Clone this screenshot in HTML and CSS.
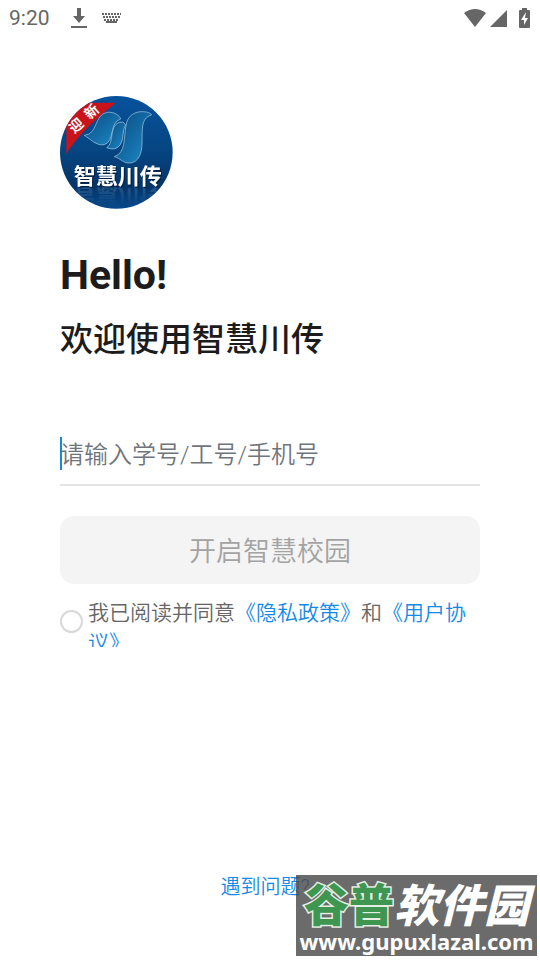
FILE: index.html
```html
<!DOCTYPE html>
<html lang="zh-CN">
<head>
    <meta charset="UTF-8">
    <meta name="viewport" content="width=device-width, initial-scale=1.0">
    <title>智慧川传</title>
    <link rel="stylesheet" href="styles.css">
</head>
<body>
    <header class="status-bar">
        <span class="time">9:20</span>
        <svg class="icon-download" width="16" height="22" viewBox="0 0 16 22">
            <path d="M6 1h4v8h4l-6 7-6-7h4z"/>
            <path d="M0 19h16v2H0z"/>
        </svg>
        <svg class="icon-keyboard" width="19" height="12" viewBox="0 0 19 12">
            <path d="M0 2h19M1 5h17M2 8h15" stroke-width="2" stroke-dasharray="2 1"/>
            <path d="M4 10h11" stroke-width="2"/>
        </svg>
        <div class="status-right">
            <svg width="24" height="20" viewBox="0 0 24 20">
                <path d="M1 5Q12-3 23 5L12 19z"/>
            </svg>
            <svg width="19" height="19" viewBox="0 0 19 19">
                <path d="M18 1v17H1z" stroke-linejoin="round"/>
            </svg>
            <svg class="icon-battery" width="11" height="20" viewBox="0 0 11 20">
                <path d="M3 0h5v2h2q1 0 1 1v16q0 1-1 1H1q-1 0-1-1V3q0-1 1-1h2z"/>
                <path class="bolt" d="M7 4L2 12h3v5l4-7H6z"/>
            </svg>
        </div>
    </header>

    <main class="login">
        <svg class="logo" viewBox="30 33 339 339" role="img" aria-label="智慧川传">
            <defs>
                <linearGradient id="bg" x1="0" y1="0" x2="0" y2="1">
                    <stop offset="0" stop-color="#07519c"/>
                    <stop offset="0.45" stop-color="#064784"/>
                    <stop offset="0.8" stop-color="#053468"/>
                    <stop offset="1" stop-color="#07498c"/>
                </linearGradient>
                <linearGradient id="wing" x1="0" y1="0" x2="1" y2="1">
                    <stop offset="0" stop-color="#0a4b80"/>
                    <stop offset="0.6" stop-color="#1570ab"/>
                    <stop offset="1" stop-color="#2190c9"/>
                </linearGradient>
                <linearGradient id="fade" x1="0" y1="0" x2="0" y2="1">
                    <stop offset="0.3" stop-color="#4c86b5" stop-opacity="0"/>
                    <stop offset="1" stop-color="#4c86b5" stop-opacity="0.5"/>
                </linearGradient>
                <clipPath id="circle"><circle cx="199" cy="202" r="169"/></clipPath>
            </defs>
            <g clip-path="url(#circle)">
                <path fill="url(#bg)" d="M30 33h339v339H30z"/>
                <path fill="#c8131b" d="M49 53h148C160 84 84 146 49 207z"/>
                <g fill="url(#wing)" stroke="#a9cfe4" stroke-width="2" stroke-linejoin="round">
                    <path d="M103 151C145 148 132 87 172 82C192 80 208 90 212 102C177 112 195 170 163 179C138 183 123 163 103 151z"/>
                    <path d="M170 188C194 174 176 125 207 112Q220 107 227 119C216 136 222 163 211 179Q197 199 170 188z"/>
                    <path d="M193 215C228 204 221 158 228 121C233 91 254 79 280 80Q300 81 305 90C270 98 278 142 276 174C276 205 266 232 240 234C219 236 210 218 193 215z"/>
                </g>
                <text class="logo-tag" transform="translate(73 147) rotate(-42)">迎</text>
                <text class="logo-tag" transform="translate(119 105) rotate(-42)">新</text>
                <text class="logo-reflection" transform="translate(71 312) scale(1 -1)" fill="url(#fade)" aria-hidden="true">智慧川传</text>
                <text class="logo-name" x="71" y="297">智慧川传</text>
            </g>
        </svg>

        <h1>Hello!</h1>
        <h2>欢迎使用智慧川传</h2>

        <form>
            <div class="field">
                <input type="text" name="account" placeholder="请输入学号/工号/手机号" aria-label="请输入学号/工号/手机号">
            </div>
            <button type="submit" disabled>开启智慧校园</button>
            <div class="agreement">
                <input type="checkbox" id="agree">
                <p><label for="agree">我已阅读并同意</label><a href="#privacy">《隐私政策》</a>和<a href="#terms">《用户协议》</a></p>
            </div>
        </form>
    </main>

    <footer>
        <a href="#help">遇到问题?</a>
    </footer>

    <div class="watermark">
        <div class="watermark-name"><span>谷普</span><em>软件园</em></div>
        <div class="watermark-url">www.gupuxlazal.com</div>
    </div>
</body>
</html>
```

FILE: styles.css
```css
* {
    box-sizing: border-box;
}

body {
    font-family: Roboto, "Noto Sans CJK SC", sans-serif;
    background-color: white;
    color: #1c1c1c;
    margin: 0;
    min-height: 100vh;
    display: flex;
    flex-direction: column;
    position: relative;
}

a {
    color: #1489e6;
    text-decoration: none;
}

/* status bar */
.status-bar {
    display: flex;
    align-items: center;
    height: 36px;
    padding: 0 10px 0 9px;
    color: #666;
}

.status-bar svg {
    fill: #666;
}

.time {
    font-size: 21px;
}

.icon-download {
    margin-left: 21px;
}

.icon-keyboard {
    margin-left: 15px;
    stroke: #666;
}

.status-right {
    display: flex;
    align-items: center;
    gap: 2px;
    margin-left: auto;
}

.icon-battery {
    margin-left: 9px;
}

.status-bar .bolt {
    fill: white;
}

/* login */
.login {
    padding: 60px 60px 0;
}

.logo {
    display: block;
    width: 113px;
    height: 113px;
}

.logo text {
    font-family: "Noto Sans CJK SC", sans-serif;
    font-weight: bold;
    font-size: 66px;
}

.logo .logo-tag {
    font-size: 42px;
    fill: white;
}

.logo-name {
    fill: white;
    filter: drop-shadow(3px 4px 2px #021d3d);
}

h1 {
    font-size: 41px;
    line-height: 48px;
    margin: 42px 0 0;
}

h2 {
    font-size: 33px;
    font-weight: 500;
    line-height: 48px;
    margin: 17px 0 0;
}

.field {
    display: flex;
    align-items: center;
    margin-top: 65px;
    height: 57px;
    padding-bottom: 6px;
    border-bottom: 2px solid #e4e4e4;
}

.field::before {
    content: "";
    width: 2px;
    height: 33px;
    background-color: #1787e0;
}

.field input {
    flex: 1;
    min-width: 0;
    font-family: inherit;
    font-size: 24px;
    font-weight: 350;
    border: none;
    outline: none;
    padding: 2px 0 0;
    margin-left: -2px;
    background: transparent;
}

.field input::placeholder {
    color: #6f757b;
}

button {
    display: block;
    width: 100%;
    height: 68px;
    margin-top: 30px;
    padding-bottom: 3px;
    border: none;
    border-radius: 14px;
    background-color: #f4f4f4;
    color: #a3a3a3;
    font-family: inherit;
    font-size: 27px;
    font-weight: 350;
}

.agreement {
    display: flex;
    align-items: center;
    gap: 5px;
    height: 49px;
    margin-top: 14px;
    overflow: hidden;
}

.agreement input {
    appearance: none;
    flex: none;
    width: 23px;
    height: 23px;
    margin: 0 0 2px;
    border: 2px solid #d8d8d8;
    border-radius: 50%;
}

.agreement p {
    align-self: flex-start;
    margin: 0;
    font-size: 21px;
    font-weight: 350;
    line-height: 30px;
    color: #666;
}

footer {
    margin-top: auto;
    padding: 0 10px 58px 0;
    text-align: center;
    font-size: 20px;
    font-weight: 350;
    line-height: 30px;
}

/* watermark over the page corner */
.watermark {
    position: absolute;
    right: 3px;
    bottom: 4px;
    width: 241px;
    height: 81px;
    background-color: rgba(70, 70, 70, 0.8);
    color: white;
    text-align: center;
    white-space: nowrap;
}

.watermark-name {
    font-family: "Noto Sans CJK SC", sans-serif;
    font-size: 45px;
    font-weight: 900;
    line-height: 56px;
}

.watermark-name span {
    color: #3f9650;
    -webkit-text-stroke: 3px #e4f0e4;
    paint-order: stroke fill;
}

.watermark-url {
    font-family: "Noto Sans", sans-serif;
    font-size: 22px;
    font-weight: bold;
    line-height: 24px;
    margin-top: -2px;
}
```
